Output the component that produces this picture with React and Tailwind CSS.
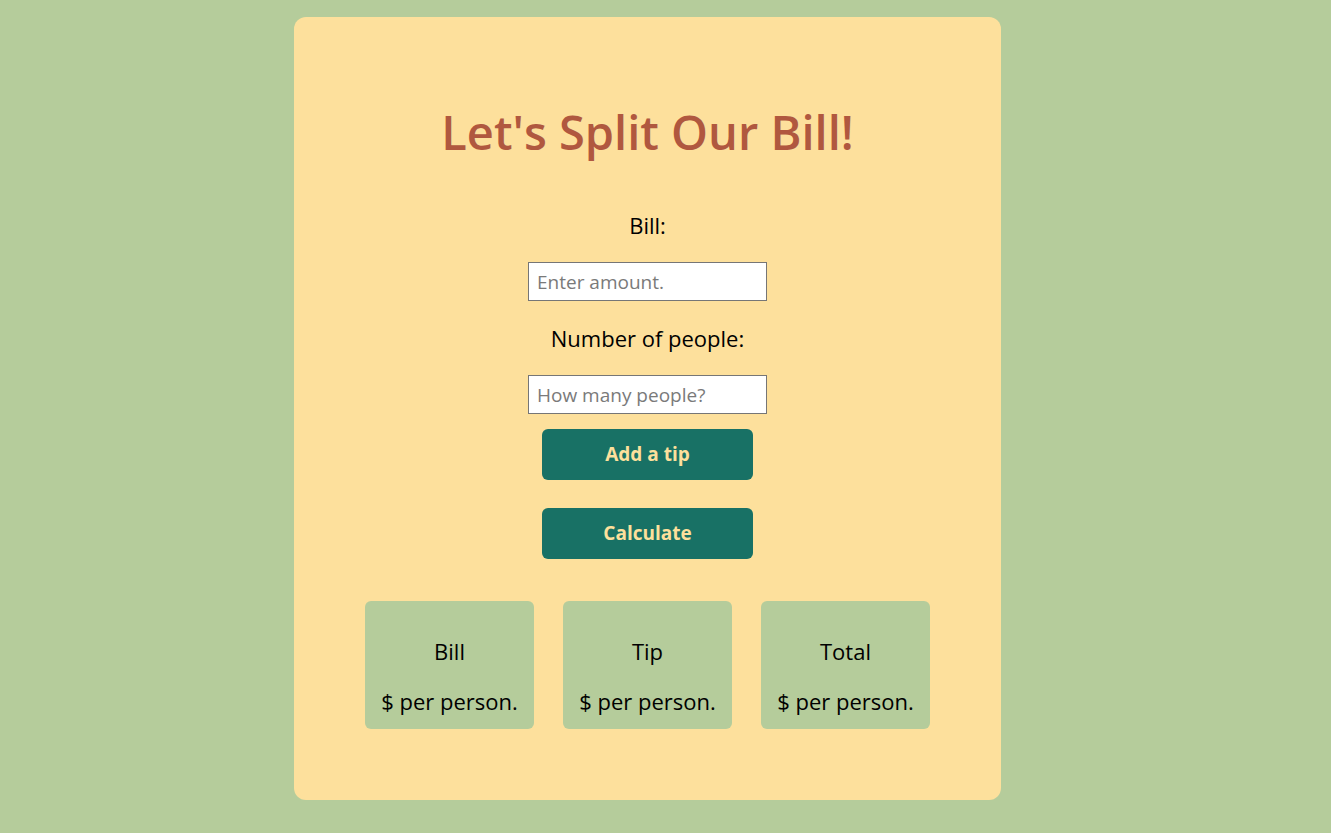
import React from "react";

const font = { fontFamily: "'Open Sans', Lato, sans-serif" };

function ResultCard({ label }) {
  return (
    <div className="w-[169px] h-[128px] rounded-md bg-[#b5cc9b] flex flex-col items-center text-[22px] text-black">
      <div className="mt-[35px] leading-[30px]">{label}</div>
      <div className="mt-[20px] leading-[30px]">$ per person.</div>
    </div>
  );
}

export default function App() {
  return (
    <div className="min-h-screen bg-[#b5cc9b] pt-[17px] pb-[33px]" style={font}>
      <div className="ml-[294px] w-[707px] h-[783px] rounded-xl bg-[#fde09c] flex flex-col items-center">
        <h1 className="mt-[87px] text-[47px] leading-[56px] font-semibold text-[#b0583f]">
          Let's Split Our Bill!
        </h1>
        <label className="mt-[50px] text-[22px] leading-[30px] text-black">Bill:</label>
        <input
          type="text"
          placeholder="Enter amount."
          className="mt-[22px] w-[239px] h-[39px] border border-[#767676] bg-white px-[8px] text-[19px] placeholder:text-[#7a7a7a] outline-none"
        />
        <label className="mt-[22px] text-[22px] leading-[30px] text-black">Number of people:</label>
        <input
          type="text"
          placeholder="How many people?"
          className="mt-[22px] w-[239px] h-[39px] border border-[#767676] bg-white px-[8px] text-[19px] placeholder:text-[#7a7a7a] outline-none"
        />
        <button className="mt-[15px] w-[211px] h-[51px] rounded-md bg-[#187165] text-[#fde09c] text-[19px] font-bold">
          Add a tip
        </button>
        <button className="mt-[28px] w-[211px] h-[51px] rounded-md bg-[#187165] text-[#fde09c] text-[19px] font-bold">
          Calculate
        </button>
        <div className="mt-[42px] flex gap-[29px]">
          <ResultCard label="Bill" />
          <ResultCard label="Tip" />
          <ResultCard label="Total" />
        </div>
      </div>
    </div>
  );
}
